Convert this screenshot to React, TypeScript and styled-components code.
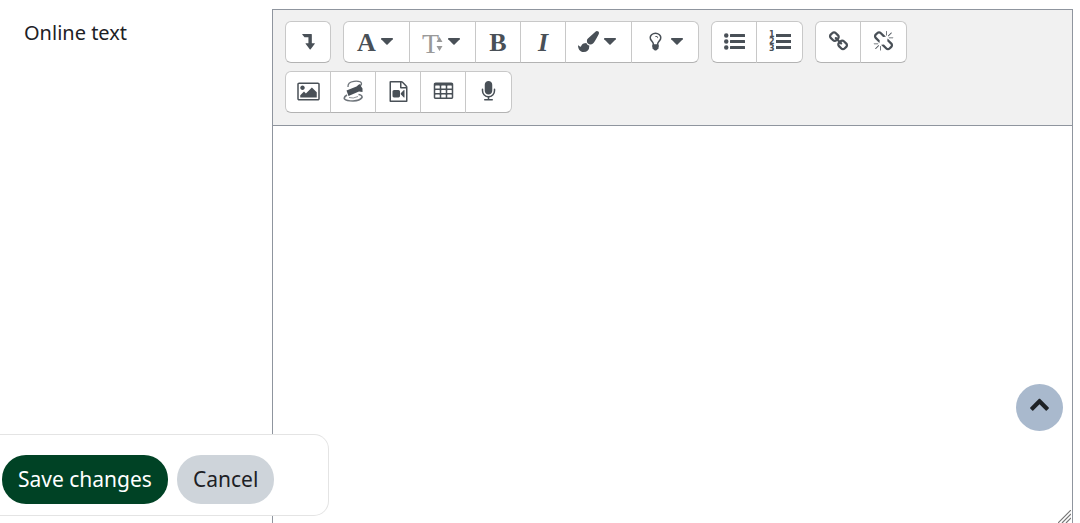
import React from "react";
import styled, { createGlobalStyle } from "styled-components";

const Global = createGlobalStyle`
  *, *::before, *::after { box-sizing: border-box; }
  body {
    margin: 0;
    background: #fff;
    color: #1d2125;
    font-family: "Noto Sans", "Open Sans", sans-serif;
    font-size: 20px;
    line-height: 30px;
  }
`;

const Page = styled.main`
  display: grid;
  grid-template-columns: 272px minmax(0, 1fr);
  height: 100vh;
  padding: 9px 7px 0 0;
  overflow: hidden;
`;

const FieldLabel = styled.label`
  padding: 9px 24px 0;
`;

const Editor = styled.div`
  position: relative;
  display: flex;
  flex-direction: column;
  min-height: 0;
  border: 1px solid #8f959e;
  border-bottom: 0;
`;

const Toolbar = styled.div`
  display: flex;
  flex-wrap: wrap;
  gap: 8px 12px;
  padding: 11px 12px 12px;
  background: #f1f1f1;
  border-bottom: 1px solid #8f959e;
`;

const Group = styled.div`
  display: flex;
`;

const Tool = styled.button<{ $wide?: boolean }>`
  display: flex;
  align-items: center;
  justify-content: center;
  gap: 4px;
  width: ${(p) => (p.$wide ? 67 : 46)}px;
  height: 42px;
  padding: ${(p) => (p.$wide ? "0 2px 2px 0" : "0 0 2px")};
  color: #495057;
  background: #fff;
  border: 1px solid #c8c8c8;
  border-bottom-color: #b3b3b3;

  & + & { margin-left: -1px; }
  & + &:last-child { width: ${(p) => (p.$wide ? 68 : 47)}px; }
  &:first-child { border-top-left-radius: 6px; border-bottom-left-radius: 6px; }
  &:last-child { border-top-right-radius: 6px; border-bottom-right-radius: 6px; }
`;

const Letter = styled.span<{ $italic?: boolean }>`
  padding-top: 4px;
  font: ${(p) => (p.$italic ? "italic" : "normal")} bold 26px/30px "Liberation Serif", serif;
`;

const SizeMark = styled.span`
  display: flex;
  align-items: center;
  padding-top: 6px;
  color: #999;
  font: 28px/30px "Liberation Serif", serif;

  svg { margin-left: -3px; }
`;

const TextArea = styled.textarea`
  flex: 1;
  width: 100%;
  padding: 8px 12px;
  border: 0;
  outline: 0;
  resize: none;
  background: #fff;
  color: inherit;
  font: inherit;
`;

const Grip = styled.svg`
  position: absolute;
  right: 1px;
  bottom: 0;
`;

const ActionBar = styled.div`
  position: fixed;
  left: 0;
  bottom: 7px;
  display: flex;
  gap: 9px;
  padding: 20px 54px 11px 2px;
  background: #fff;
  border: 1px solid #e4e4e4;
  border-left: 0;
  border-radius: 0 15px 15px 0;
`;

const Action = styled.button<{ $primary?: boolean }>`
  height: 49px;
  padding: 0 16px 2px;
  border: 0;
  border-radius: 24px;
  color: ${(p) => (p.$primary ? "#fff" : "#1d2125")};
  background: ${(p) => (p.$primary ? "#004225" : "#ced4da")};
  font: inherit;
  font-size: 21px;
`;

const ToTop = styled.button`
  position: fixed;
  right: 17px;
  bottom: 92px;
  display: flex;
  align-items: center;
  justify-content: center;
  width: 47px;
  height: 47px;
  padding: 0 0 8px;
  border: 0;
  border-radius: 50%;
  color: #1d2125;
  background: #a9b9cd;
`;

const paths = {
  picture:
    "M576 576q0 80-56 136t-136 56-136-56-56-136 56-136 136-56 136 56 56 136zm1024 384v448h-1408v-192l320-320 160 160 512-512zm96-704h-1600q-13 0-22.5 9.5t-9.5 22.5v1216q0 13 9.5 22.5t22.5 9.5h1600q13 0 22.5-9.5t9.5-22.5v-1216q0-13-9.5-22.5t-22.5-9.5zm160 32v1216q0 66-47 113t-113 47h-1600q-66 0-113-47t-47-113v-1216q0-66 47-113t113-47h1600q66 0 113 47t47 113z",
  link:
    "M1520 1216q0-40-28-68l-208-208q-28-28-68-28-42 0-72 32 3 3 19 18.5t21.5 21.5 15 19 13 25.5 3.5 27.5q0 40-28 68t-68 28q-15 0-27.5-3.5t-25.5-13-19-15-21.5-21.5-18.5-19q-33 31-33 73 0 40 28 68l206 207q27 27 68 27 40 0 68-26l147-146q28-28 28-67zm-703-705q0-40-28-68l-206-207q-28-28-68-28-39 0-68 27l-147 146q-28 28-28 67 0 40 28 68l208 208q27 27 68 27 42 0 72-31-3-3-19-18.5t-21.5-21.5-15-19-13-25.5-3.5-27.5q0-40 28-68t68-28q15 0 27.5 3.5t25.5 13 19 15 21.5 21.5 18.5 19q33-31 33-73zm895 705q0 120-85 203l-147 146q-83 83-203 83-121 0-204-85l-206-207q-83-83-83-203 0-123 88-209l-88-88q-86 88-208 88-120 0-204-84l-208-208q-84-84-84-204t85-203l147-146q83-83 203-83 121 0 204 85l206 207q83 83 83 203 0 123-88 209l88 88q86-88 208-88 120 0 204 84l208 208q84 84 84 204z",
  unlink:
    "M503 1271l-256 256q-10 9-23 9-12 0-23-9-9-10-9-23t9-23l256-256q10-9 23-9t23 9q9 10 9 23t-9 23zm169 41v320q0 14-9 23t-23 9-23-9-9-23v-320q0-14 9-23t23-9 23 9 9 23zm-224-224q0 14-9 23t-23 9h-320q-14 0-23-9t-9-23 9-23 23-9h320q14 0 23 9t9 23zm1264 128q0 120-85 203l-147 146q-83 83-203 83-121 0-204-85l-334-335q-21-21-42-56l239-18 273 274q28 28 68 27.5t68-27.5l147-146q28-28 28-67 0-40-28-68l-274-275 18-239q35 21 56 42l336 336q84 86 84 204zm-617-724l-239 18-273-274q-28-28-68-28-39 0-68 27l-147 146q-28 28-28 67 0 40 28 68l274 274-18 240q-35-21-56-42l-336-336q-84-86-84-204 0-120 85-203l147-146q83-83 203-83 121 0 204 85l334 335q21 21 42 56zm633 84q0 14-9 23t-23 9h-320q-14 0-23-9t-9-23 9-23 23-9h320q14 0 23 9t9 23zm-544-544v320q0 14-9 23t-23 9-23-9-9-23v-320q0-14 9-23t23-9 23 9 9 23zm407 151l-256 256q-11 9-23 9t-23-9q-9-10-9-23t9-23l256-256q10-9 23-9t23 9q9 10 9 23t-9 23z",
  brush:
    "M1615 0q70 0 122.5 46.5t52.5 116.5q0 63-45 151-332 629-465 752-97 91-218 91-126 0-216.5-92.5t-90.5-219.5q0-128 92-212l638-579q59-54 130-54zm-909 1034q39 76 106.5 130t150.5 76l1 71q4 213-129.5 347t-348.5 134q-123 0-218-46.5t-152.5-127.5-86.5-183-29-220q7 5 41 30t62 44.5 59 36.5 46 17q41 0 55-37 25-66 57.5-112.5t69.5-76 88-47.5 103-25.5 125-10.5z",
  microphone:
    "M1472 704v128q0 221-147.5 384.5t-364.5 187.5v132h256q26 0 45 19t19 45-19 45-45 19h-640q-26 0-45-19t-19-45 19-45 45-19h256v-132q-217-24-364.5-187.5t-147.5-384.5v-128q0-26 19-45t45-19 45 19 19 45v128q0 185 131.5 316.5t316.5 131.5 316.5-131.5 131.5-316.5v-128q0-26 19-45t45-19 45 19 19 45zm-256-384v512q0 132-94 226t-226 94-226-94-94-226v-512q0-132 94-226t226-94 226 94 94 226z",
  bulb:
    "M1120 576q0 13-9.5 22.5t-22.5 9.5-22.5-9.5-9.5-22.5q0-46-54-71t-106-25q-13 0-22.5-9.5t-9.5-22.5 9.5-22.5 22.5-9.5q50 0 99.5 16t87 54 37.5 90zm160 0q0-72-34.5-134t-90-101.5-123-62-136.5-22.5-136.5 22.5-123 62-90 101.5-34.5 134q0 101 68 180 10 11 30.5 33t30.5 33q128 153 141 298h228q13-145 141-298 10-11 30.5-33t30.5-33q68-79 68-180zm128 0q0 155-103 268-45 49-74.5 87t-59.5 95.5-34 107.5q47 28 47 82 0 37-25 64 25 27 25 64 0 52-45 81 13 23 13 47 0 46-31.5 71t-77.5 25q-20 44-60 70t-87 26-87-26-60-70q-46 0-77.5-25t-31.5-71q0-24 13-47-45-29-45-81 0-37 25-64-25-27-25-64 0-54 47-82-4-50-34-107.5t-59.5-95.5-74.5-87q-103-113-103-268 0-99 44.5-184.5t117-142 164-89 186.5-32.5 186.5 32.5 164 89 117 142 44.5 184.5z",
  video:
    "M1596 380q28 28 48 76t20 88v1152q0 40-28 68t-68 28h-1344q-40 0-68-28t-28-68v-1600q0-40 28-68t68-28h896q40 0 88 20t76 48zm-444-244v376h376q-10-29-22-41l-313-313q-12-12-41-22zm384 1528v-1024h-416q-40 0-68-28t-28-68v-416h-768v1536h1280zM896 768q52 0 90 38t38 90v384q0 52-38 90t-90 38h-384q-52 0-90-38t-38-90v-384q0-52 38-90t90-38h384zm492 2q20 8 20 30v576q0 22-20 30-8 2-12 2-14 0-23-9l-265-266v-90l265-266q9-9 23-9 4 0 12 2z",
  levelDown:
    "M384 256h764q32 0 32 32v752h230q56 0 22 50l-368 480q-24 28-48 0l-368-480q-34-50 22-50h220V540H580q-16 0-26-12L362 300q-18-44 22-44z",
  table:
    "M224 128h1344q66 0 113 47t47 113v1088q0 66-47 113t-113 47H224q-66 0-113-47t-47-113V288q0-66 47-113t113-47zM192 416v192q0 32 32 32h320q32 0 32-32V416q0-32-32-32H224q-32 0-32 32zM704 416v192q0 32 32 32h320q32 0 32-32V416q0-32-32-32H736q-32 0-32 32zM1216 416v192q0 32 32 32h320q32 0 32-32V416q0-32-32-32h-320q-32 0-32 32zM192 800v192q0 32 32 32h320q32 0 32-32V800q0-32-32-32H224q-32 0-32 32zM704 800v192q0 32 32 32h320q32 0 32-32V800q0-32-32-32H736q-32 0-32 32zM1216 800v192q0 32 32 32h320q32 0 32-32V800q0-32-32-32h-320q-32 0-32 32zM192 1184v192q0 32 32 32h320q32 0 32-32v-192q0-32-32-32H224q-32 0-32 32zM704 1184v192q0 32 32 32h320q32 0 32-32v-192q0-32-32-32H736q-32 0-32 32zM1216 1184v192q0 32 32 32h320q32 0 32-32v-192q0-32-32-32h-320q-32 0-32 32z",
  list:
    "M0 384a192 192 0 1 0 384 0a192 192 0 1 0-384 0zM0 896a192 192 0 1 0 384 0a192 192 0 1 0-384 0zM0 1408a192 192 0 1 0 384 0a192 192 0 1 0-384 0zM544 256h1216q32 0 32 32v192q0 32-32 32H544q-32 0-32-32V288q0-32 32-32zM544 768h1216q32 0 32 32v192q0 32-32 32H544q-32 0-32-32V800q0-32 32-32zM544 1280h1216q32 0 32 32v192q0 32-32 32H544q-32 0-32-32v-192q0-32 32-32z",
  chevronUp:
    "M1683 1331l-166 165q-19 19-45 19t-45-19l-531-531-531 531q-19 19-45 19t-45-19l-166-165q-19-19-19-45.5t19-45.5l742-741q19-19 45-19t45 19l742 741q19 19 19 45.5t-19 45.5z",
};

function Icon({ name }: { name: keyof typeof paths }) {
  return (
    <svg width="21" height="21" viewBox="0 0 1792 1792" fill="currentColor" fillRule="evenodd" overflow="visible" aria-hidden="true">
      <path d={paths[name]} />
    </svg>
  );
}

function Caret() {
  return (
    <svg width="14" height="21" viewBox="0 0 14 21" fill="currentColor" aria-hidden="true">
      <path d="M1.6 7h10.8q1 .4.4 1.3L7.6 13.6q-.6.5-1.2 0L1.2 8.300Q.6 7.400 1.6 7z" />
    </svg>
  );
}

const Numeral = styled.text`
  font: bold 8px "DejaVu Sans", sans-serif;
`;

function NumberedList() {
  return (
    <svg width="22" height="22" viewBox="0 0 22 22" fill="currentColor" overflow="visible" aria-hidden="true">
      <Numeral x="0" y="7">1</Numeral>
      <Numeral x="0" y="14">2</Numeral>
      <Numeral x="0" y="21">3</Numeral>
      <path d="M7 4h15v3H7zM7 10h15v3H7zM7 16h15v3H7z" />
    </svg>
  );
}

function Media() {
  return (
    <svg width="20" height="22" viewBox="0 0 20 22" fill="none" stroke="currentColor" aria-hidden="true">
      <path d="M5 7Q4.500 2 11 1.300q7-.6 7.500 2.200.2 2-3.500 3" strokeWidth="1.300" opacity=".8" />
      <path d="M3.500 10.500l2 5.500L16 11.500l3.500.5V8.500l-3-4.500-3 2.500z" fill="currentColor" stroke="none" />
      <path d="M4 15Q.5 17 1.500 19q2 2 8.500 2 7-.2 9-3.500.5-2.500-3.500-3" strokeWidth="1.600" opacity=".8" />
      <path d="M6 17.500q4 1.500 9-1" strokeWidth="1" opacity=".6" />
    </svg>
  );
}

export default function App() {
  return (
    <>
      <Global />
      <Page>
        <FieldLabel htmlFor="online-text">Online text</FieldLabel>
        <Editor>
          <Toolbar role="toolbar" aria-label="Editor">
            <Group>
              <Tool type="button" aria-label="Show more buttons"><Icon name="levelDown" /></Tool>
            </Group>
            <Group>
              <Tool type="button" $wide aria-label="Paragraph styles"><Letter>A</Letter><Caret /></Tool>
              <Tool type="button" $wide aria-label="Font size">
                <SizeMark>
                  T
                  <svg width="7" height="14" viewBox="0 0 7 14" fill="currentColor" aria-hidden="true">
                    <path d="M3.500 0L6.500 5h-6zM3.500 14L.5 9h6z" />
                  </svg>
                </SizeMark>
                <Caret />
              </Tool>
              <Tool type="button" aria-label="Bold"><Letter>B</Letter></Tool>
              <Tool type="button" aria-label="Italic"><Letter $italic>I</Letter></Tool>
              <Tool type="button" $wide aria-label="Font colour"><Icon name="brush" /><Caret /></Tool>
              <Tool type="button" $wide aria-label="Background colour"><Icon name="bulb" /><Caret /></Tool>
            </Group>
            <Group>
              <Tool type="button" aria-label="Unordered list"><Icon name="list" /></Tool>
              <Tool type="button" aria-label="Ordered list"><NumberedList /></Tool>
            </Group>
            <Group>
              <Tool type="button" aria-label="Link"><Icon name="link" /></Tool>
              <Tool type="button" aria-label="Unlink"><Icon name="unlink" /></Tool>
            </Group>
            <Group>
              <Tool type="button" aria-label="Insert image"><Icon name="picture" /></Tool>
              <Tool type="button" aria-label="Insert media"><Media /></Tool>
              <Tool type="button" aria-label="Insert video"><Icon name="video" /></Tool>
              <Tool type="button" aria-label="Insert table"><Icon name="table" /></Tool>
              <Tool type="button" aria-label="Record audio"><Icon name="microphone" /></Tool>
            </Group>
          </Toolbar>
          <TextArea id="online-text" />
          <Grip width="13" height="13" viewBox="0 0 13 13" fill="none" stroke="#777" strokeWidth="1.200" aria-hidden="true">
            <path d="M0 13L13 0M4 13L13 4M8 13L13 8" />
          </Grip>
        </Editor>
      </Page>
      <ActionBar>
        <Action type="submit" $primary>Save changes</Action>
        <Action type="button">Cancel</Action>
      </ActionBar>
      <ToTop type="button" aria-label="Back to top"><Icon name="chevronUp" /></ToTop>
    </>
  );
}
